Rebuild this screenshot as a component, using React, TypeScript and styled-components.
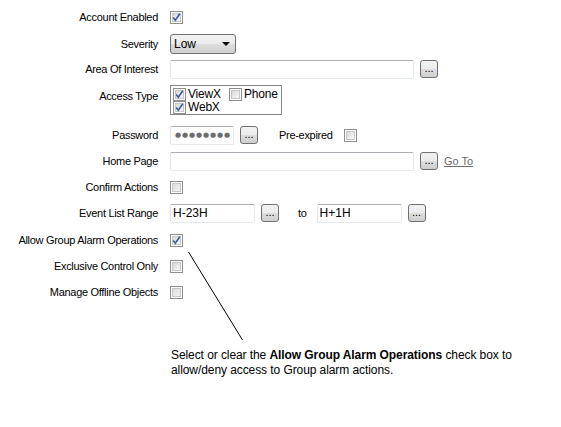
import React from "react";
import styled, { createGlobalStyle } from "styled-components";

const Global = createGlobalStyle`
  html, body { margin: 0; padding: 0; background: #ffffff; }
  body { font-family: "Liberation Sans", Arial, sans-serif; font-size: 11px; color: #000; }
`;

const Page = styled.div`
  position: relative;
  width: 561px;
  height: 427px;
  padding-top: 4px;
  box-sizing: border-box;
  overflow: hidden;
`;

const Form = styled.div`
  display: flex;
  flex-direction: column;
`;

const Row = styled.div<{ $h: number; $top?: boolean }>`
  display: flex;
  align-items: ${(p) => (p.$top ? "flex-start" : "center")};
  height: ${(p) => p.$h}px;
  padding-top: ${(p) => (p.$top ? 5 : 0)}px;
  box-sizing: border-box;
`;

const Label = styled.div<{ $top?: boolean }>`
  width: 158px;
  text-align: right;
  margin-right: 12px;
  line-height: 13px;
  white-space: nowrap;
  letter-spacing: -0.3px;
  margin-top: ${(p) => (p.$top ? 5 : 0)}px;
`;

const Controls = styled.div`
  display: flex;
  align-items: center;
`;

const BoxWrap = styled.span`
  display: inline-block;
  width: 13px;
  height: 13px;
  box-sizing: border-box;
  border: 1px solid #8e8f8f;
  background: #ffffff;
  padding: 1px;
  flex: none;
`;

const BoxInner = styled.span`
  display: block;
  width: 100%;
  height: 100%;
  box-sizing: border-box;
  border: 1px solid #c7c7c7;
  background: linear-gradient(135deg, #d8d8d8 0%, #ececec 60%, #f6f6f6 100%);
  position: relative;
`;

const CheckSvg = styled.svg`
  position: absolute;
  left: -1px;
  top: -1px;
`;

const CheckBox: React.FC<{ checked?: boolean }> = ({ checked }) => (
  <BoxWrap>
    <BoxInner>
      {checked && (
        <CheckSvg width="9" height="9" viewBox="0 0 9 9">
          <path d="M1.2 4.6 L3.3 7.2 L7.8 0.8" fill="none" stroke="#3c5a9a" strokeWidth="1.6" />
        </CheckSvg>
      )}
    </BoxInner>
  </BoxWrap>
);

const Select = styled.div`
  width: 66px;
  height: 20px;
  box-sizing: border-box;
  border: 1px solid #707070;
  border-radius: 3px;
  background: linear-gradient(#f2f2f2 0%, #ebebeb 50%, #dddddd 51%, #cfcfcf 100%);
  display: flex;
  align-items: center;
  justify-content: space-between;
  padding: 0 4px 0 3px;
  font-size: 12px;
`;

const Arrow = styled.span`
  width: 0;
  height: 0;
  border-left: 4px solid transparent;
  border-right: 4px solid transparent;
  border-top: 4px solid #000;
  margin-right: 1px;
`;

const Input = styled.div<{ $w: number; $ml?: number }>`
  width: ${(p) => p.$w}px;
  height: 19px;
  margin-left: ${(p) => p.$ml ?? 0}px;
  box-sizing: border-box;
  border: 1px solid;
  border-color: #abadb3 #e3e9ef #e3e9ef #e2e3ea;
  border-radius: 2px;
  background: #ffffff;
  display: flex;
  align-items: center;
  padding-left: 2px;
  font-size: 12px;
  color: #000;
  overflow: hidden;
`;

const Dots = styled.span`
  color: #6d6d6d;
  font-size: 7px;
  letter-spacing: 0.9px;
  font-family: "DejaVu Sans", sans-serif;
  padding-left: 2px;
  white-space: nowrap;
`;

const Dotted = styled.button<{ $ml: number }>`
  width: 18px;
  height: 18px;
  margin-left: ${(p) => p.$ml}px;
  padding: 0;
  box-sizing: border-box;
  border: 1px solid #707070;
  border-radius: 3px;
  background: linear-gradient(#f2f2f2 0%, #ebebeb 50%, #dddddd 51%, #cfcfcf 100%);
  font-family: "Liberation Sans", Arial, sans-serif;
  font-size: 11px;
  line-height: 11px;
  color: #000;
  display: flex;
  align-items: flex-end;
  justify-content: center;
  padding-bottom: 3px;
  flex: none;
`;

const Text = styled.span<{ $ml: number }>`
  margin-left: ${(p) => p.$ml}px;
  white-space: nowrap;
  letter-spacing: -0.3px;
  display: flex;
  align-items: center;
`;

const Link = styled.a`
  margin-left: 6px;
  color: #6b6b6b;
  text-decoration: underline;
  font-size: 11px;
`;

const Group = styled.div`
  width: 112px;
  height: 30px;
  box-sizing: border-box;
  border: 1px solid #828790;
  display: grid;
  grid-template-columns: 56px 54px;
  grid-template-rows: 13px 13px;
  padding: 2px 0 0 2px;
`;

const Option = styled.label`
  display: flex;
  align-items: center;
  gap: 2px;
  font-size: 12px;
  line-height: 13px;
  letter-spacing: -0.2px;
`;

const Leader = styled.svg`
  position: absolute;
  left: 0;
  top: 0;
  pointer-events: none;
`;

const Note = styled.p`
  margin: 40px 0 0 171px;
  font-size: 12px;
  line-height: 15px;
  width: 360px;
  letter-spacing: -0.08px;
`;

export default function App() {
  return (
    <Page>
      <Global />
      <Form>
        <Row $h={26}>
          <Label>Account Enabled</Label>
          <Controls>
            <CheckBox checked />
          </Controls>
        </Row>
        <Row $h={28}>
          <Label>Severity</Label>
          <Controls>
            <Select>
              <span>Low</span>
              <Arrow />
            </Select>
          </Controls>
        </Row>
        <Row $h={22}>
          <Label>Area Of Interest</Label>
          <Controls>
            <Input $w={244} />
            <Dotted $ml={6}>...</Dotted>
          </Controls>
        </Row>
        <Row $h={40} $top>
          <Label $top>Access Type</Label>
          <Group>
            <Option>
              <CheckBox checked />
              ViewX
            </Option>
            <Option>
              <CheckBox />
              Phone
            </Option>
            <Option>
              <CheckBox checked />
              WebX
            </Option>
          </Group>
        </Row>
        <Row $h={30}>
          <Label>Password</Label>
          <Controls>
            <Input $w={64}>
              <Dots>●●●●●●●●</Dots>
            </Input>
            <Dotted $ml={6}>...</Dotted>
            <Text $ml={21}>Pre-expired</Text>
            <Text $ml={11}>
              <CheckBox />
            </Text>
          </Controls>
        </Row>
        <Row $h={22}>
          <Label>Home Page</Label>
          <Controls>
            <Input $w={244} />
            <Dotted $ml={6}>...</Dotted>
            <Link>Go To</Link>
          </Controls>
        </Row>
        <Row $h={30}>
          <Label>Confirm Actions</Label>
          <Controls>
            <CheckBox />
          </Controls>
        </Row>
        <Row $h={22}>
          <Label>Event List Range</Label>
          <Controls>
            <Input $w={85}>H-23H</Input>
            <Dotted $ml={6}>...</Dotted>
            <Text $ml={19}>to</Text>
            <Input $w={85} $ml={10}>H+1H</Input>
            <Dotted $ml={6}>...</Dotted>
          </Controls>
        </Row>
        <Row $h={32}>
          <Label>Allow Group Alarm Operations</Label>
          <Controls>
            <CheckBox checked />
          </Controls>
        </Row>
        <Row $h={20}>
          <Label>Exclusive Control Only</Label>
          <Controls>
            <CheckBox />
          </Controls>
        </Row>
        <Row $h={32}>
          <Label>Manage Offline Objects</Label>
          <Controls>
            <CheckBox />
          </Controls>
        </Row>
      </Form>
      <Note>
        Select or clear the <b>Allow Group Alarm Operations</b> check box to allow/deny access to Group alarm actions.
      </Note>
      <Leader width="561" height="427">
        <line x1="188.5" y1="252" x2="242.5" y2="340" stroke="#000" strokeWidth="1" />
      </Leader>
    </Page>
  );
}
